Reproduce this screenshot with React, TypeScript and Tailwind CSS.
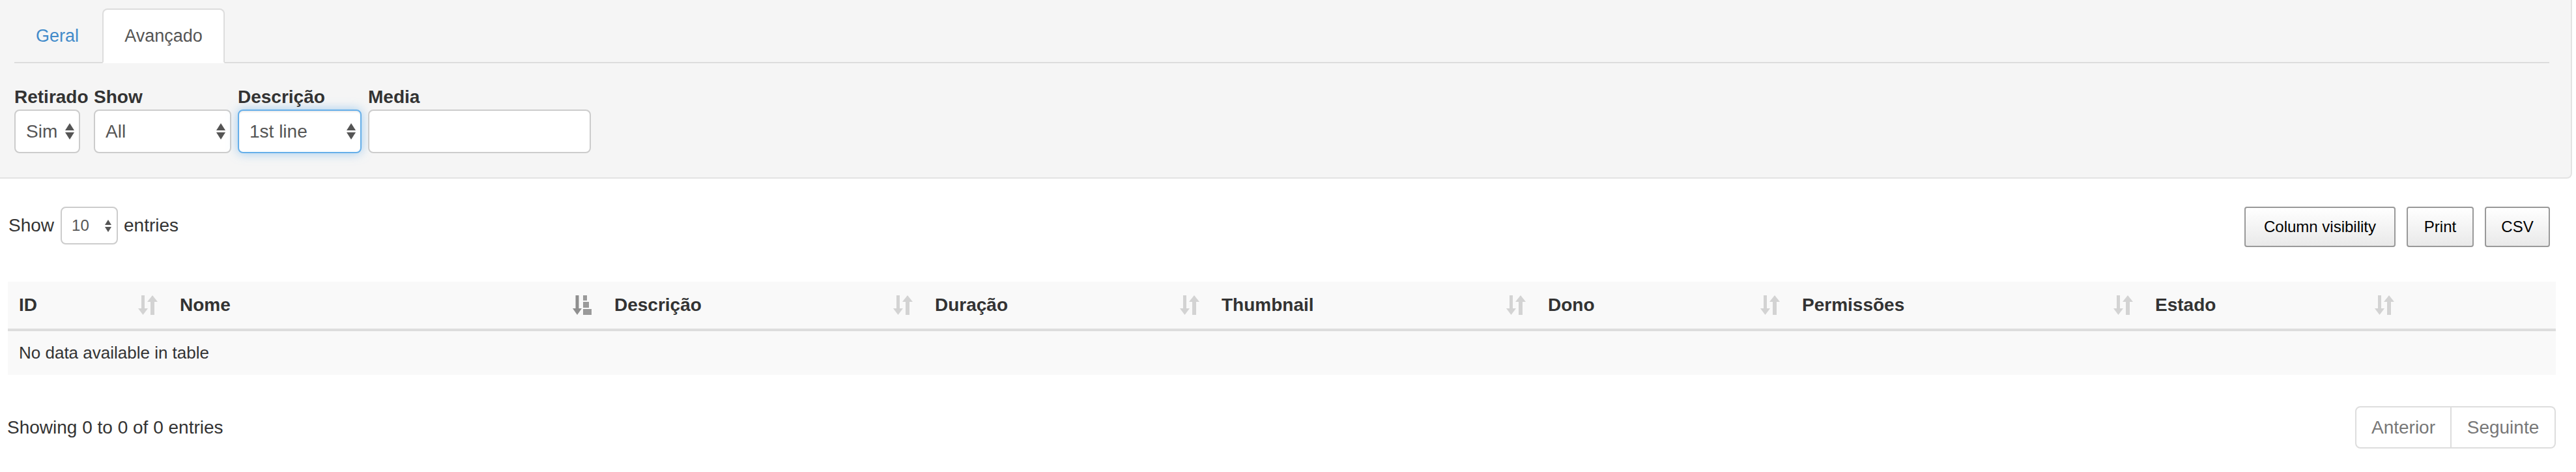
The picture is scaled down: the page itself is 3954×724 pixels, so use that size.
import React from "react";

const columns = [
  { title: "ID", width: "w-[247px]", sort: "none" },
  { title: "Nome", width: "w-[667px]", sort: "desc" },
  { title: "Descrição", width: "w-[492px]", sort: "none" },
  { title: "Duração", width: "w-[440px]", sort: "none" },
  { title: "Thumbnail", width: "w-[501px]", sort: "none" },
  { title: "Dono", width: "w-[390px]", sort: "none" },
  { title: "Permissões", width: "w-[542px]", sort: "none" },
  { title: "Estado", width: "w-[401px]", sort: "none" },
  { title: "", width: "w-[231px]", sort: "off" },
];

const SelectArrows = ({ small }: { small?: boolean }) =>
  small ? (
    <svg width="10" height="19" viewBox="0 0 10 19">
      <polygon points="5,0 10,8 0,8" fill="#555" />
      <polygon points="0,11 10,11 5,19" fill="#555" />
    </svg>
  ) : (
    <svg width="14" height="25" viewBox="0 0 14 25">
      <polygon points="7,0 14,11 0,11" fill="#555" />
      <polygon points="0,14 14,14 7,25" fill="#555" />
    </svg>
  );

const SortIcon = ({ sort }: { sort: string }) => {
  if (sort === "off") return null;
  if (sort === "desc") {
    return (
      <svg width="30" height="30" viewBox="0 0 30 30" className="shrink-0">
        <rect x="4.5" y="0" width="5" height="20" fill="#8f8f8f" />
        <polygon points="0,20 14,20 7,30" fill="#8f8f8f" />
        <rect x="16" y="0" width="6" height="8" fill="#9a9a9a" />
        <rect x="16" y="10" width="9" height="9" fill="#9a9a9a" />
        <rect x="16" y="21" width="13" height="9" fill="#9a9a9a" />
      </svg>
    );
  }
  return (
    <svg width="30" height="30" viewBox="0 0 30 30" className="shrink-0">
      <rect x="5" y="0" width="5" height="20" fill="#d3d3d3" />
      <polygon points="0,20 15,20 7.5,30" fill="#d3d3d3" />
      <polygon points="22,0 30,10 14,10" fill="#d3d3d3" />
      <rect x="19" y="10" width="6" height="20" fill="#d3d3d3" />
    </svg>
  );
};

const FilterSelect = ({ value, focused }: { value: string; focused?: boolean }) => (
  <div
    className={
      focused
        ? "flex h-[67px] items-center justify-between rounded-[8px] border-2 border-[#66afe9] bg-white pl-[16px] pr-[7px] text-[28px] text-[#555] shadow-[inset_0_2px_2px_rgba(0,0,0,0.075),0_0_16px_rgba(102,175,233,0.6)]"
        : "flex h-[67px] items-center justify-between rounded-[8px] border-2 border-[#ccc] bg-white pl-[16px] pr-[7px] text-[28px] text-[#555]"
    }
  >
    <span>{value}</span>
    <SelectArrows />
  </div>
);

const FilterGroup = ({
  label,
  width,
  children,
}: {
  label: string;
  width: string;
  children: React.ReactNode;
}) => (
  <div className={width}>
    <div className="h-[37px] whitespace-nowrap text-[28px] font-bold leading-[36px] text-[#333]">
      {label}
    </div>
    {children}
  </div>
);

const DtButton = ({ label, width }: { label: string; width: string }) => (
  <button
    className={`${width} h-[62px] rounded-[4px] border-2 border-[#999] bg-gradient-to-b from-white to-[#e9e9e9] text-[24px] text-black`}
  >
    {label}
  </button>
);

export default function App() {
  return (
    <div className="min-h-[724px] w-[3954px] bg-white font-['Liberation_Sans',Arial,sans-serif] text-[28px] text-[#333]">
      <div className="w-[3948px] rounded-br-[8px] border-b-2 border-r-2 border-[#e3e3e3] bg-[#f5f5f5] pb-[37px] pl-[22px] pr-[33px] pt-[13px]">
        <div className="flex h-[84px] border-b-2 border-[#ddd] text-[27px]">
          <a className="-mb-[2px] mr-[4px] block h-[84px] w-[131px] rounded-t-[8px] border-2 border-transparent pl-[31px] pt-[20px] leading-[40px] text-[#428bca]">
            Geral
          </a>
          <a className="-mb-[2px] block h-[84px] w-[188px] rounded-t-[8px] border-2 border-[#ddd] border-b-transparent bg-white pt-[20px] text-center leading-[40px] text-[#555]">
            Avançado
          </a>
        </div>

        <div className="mt-[34px] flex gap-[10px]">
          <FilterGroup label="Retirado" width="w-[112px]">
            <div className="w-[101px]">
              <FilterSelect value="Sim" />
            </div>
          </FilterGroup>
          <FilterGroup label="Show" width="w-[211px]">
            <FilterSelect value="All" />
          </FilterGroup>
          <FilterGroup label="Descrição" width="w-[190px]">
            <FilterSelect value="1st line" focused />
          </FilterGroup>
          <FilterGroup label="Media" width="w-[342px]">
            <div className="h-[67px] rounded-[8px] border-2 border-[#ccc] bg-white" />
          </FilterGroup>
        </div>
      </div>

      <div className="ml-[12px] w-[3911px]">
        <div className="mt-[43px] flex items-start justify-between">
          <div className="flex h-[58px] items-center">
            <span className="ml-[1px]">Show</span>
            <div className="ml-[10px] flex h-[58px] w-[88px] items-center justify-between rounded-[8px] border-2 border-[#ccc] bg-white pl-[15px] pr-[8px] text-[24px] text-[#555]">
              <span>10</span>
              <SelectArrows small />
            </div>
            <span className="ml-[9px]">entries</span>
          </div>
          <div className="mr-[9px] flex gap-[17px]">
            <DtButton label="Column visibility" width="w-[232px]" />
            <DtButton label="Print" width="w-[103px]" />
            <DtButton label="CSV" width="w-[100px]" />
          </div>
        </div>

        <table className="mt-[53px] w-full table-fixed border-separate border-spacing-0 bg-[#f9f9f9]">
          <thead>
            <tr>
              {columns.map((col, i) => (
                <th
                  key={i}
                  className={`${col.width} border-b-4 border-[#ddd] p-0 text-left text-[28px] font-bold`}
                >
                  <div className="flex h-[72px] items-center justify-between pl-[17px] pr-[17px] leading-[40px]">
                    <span>{col.title}</span>
                    <SortIcon sort={col.sort} />
                  </div>
                </th>
              ))}
            </tr>
          </thead>
          <tbody>
            <tr>
              <td colSpan={9} className="pb-[14px] pl-[17px] pt-[13px] text-[26px] leading-[40px]">
                No data available in table
              </td>
            </tr>
          </tbody>
        </table>

        <div className="mt-[48px] flex items-center justify-between">
          <span className="-ml-[1px]">Showing 0 to 0 of 0 entries</span>
          <div className="flex text-[28px] text-[#777]">
            <div className="flex h-[65px] w-[148px] items-center justify-center rounded-l-[8px] border-2 border-[#ddd] bg-white">
              Anterior
            </div>
            <div className="flex h-[65px] w-[160px] items-center justify-center rounded-r-[8px] border-2 border-l-0 border-[#ddd] bg-white">
              Seguinte
            </div>
          </div>
        </div>
      </div>
    </div>
  );
}
